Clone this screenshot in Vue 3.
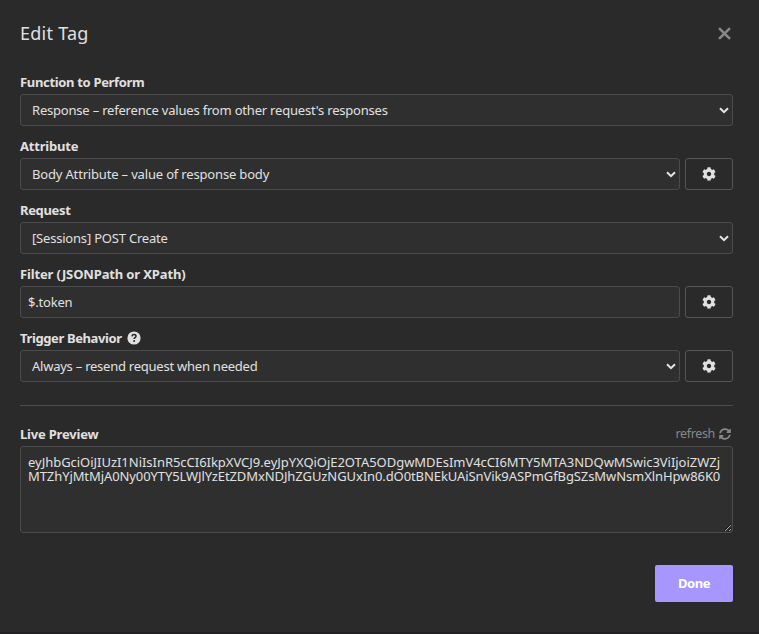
<script setup>
const fields = [
  { label: 'Function to Perform', value: "Response – reference values from other request's responses", kind: 'select', key: 'function' },
  { label: 'Attribute', value: 'Body Attribute – value of response body', kind: 'select', gear: true, key: 'attribute' },
  { label: 'Request', value: '[Sessions] POST Create', kind: 'select', key: 'request' },
  { label: 'Filter (JSONPath or XPath)', value: '$.token', kind: 'input', gear: true, key: 'filter' },
  { label: 'Trigger Behavior', value: 'Always – resend request when needed', kind: 'select', gear: true, help: true, key: 'trigger' },
]
</script>

<template>
  <main class="dialog">
    <header class="head">
      <h1><span>Edit Tag</span></h1>
      <button class="close" aria-label="Close">
        <svg width="13" height="13" viewBox="0 0 13 13"><path d="M1.800 1.800 11.200 11.200M11.200 1.800 1.800 11.200" fill="none" stroke="#888" stroke-width="2.600" stroke-linecap="round" /></svg>
      </button>
    </header>

    <section v-for="f in fields" :key="f.key" class="field" :class="f.key">
      <div class="label">
        <span class="label-text">{{ f.label }}</span>
        <svg v-if="f.help" class="help" width="14" height="14" viewBox="0 0 14 14">
          <circle cx="7" cy="7" r="6.600" fill="#e0e0e0" />
          <path d="M5 5.400C5.100 4.200 5.900 3.600 7 3.600c1.200 0 2 .7 2 1.700 0 1.300-1.900 1.400-1.900 2.800" fill="none" stroke="#2a2a2a" stroke-width="1.500" />
          <circle cx="7.100" cy="10" r="1" fill="#2a2a2a" />
        </svg>
      </div>
      <div class="row">
        <div class="control" :class="f.kind">
          <span class="value">{{ f.value }}</span>
          <svg v-if="f.kind === 'select'" width="10" height="7" viewBox="0 0 10 7"><path d="M1 1.200 5 5.200 9 1.200" fill="none" stroke="#e4e4e4" stroke-width="2" /></svg>
        </div>
        <button v-if="f.gear" class="gear" aria-label="Settings">
          <svg width="14" height="14" viewBox="0 0 512 512"><path fill="#e0e0e0" d="M487.400 315.700l-42.600-24.600c4.300-23.200 4.300-47 0-70.200l42.600-24.600c4.900-2.800 7.100-8.600 5.500-14-11.100-35.600-30-67.800-54.700-94.600-3.800-4.100-10-5.100-14.800-2.300L380.800 110c-17.900-15.400-38.500-27.300-60.800-35.100V25.800c0-5.600-3.900-10.500-9.400-11.700-36.700-8.200-74.300-7.800-109.200 0-5.500 1.200-9.400 6.100-9.400 11.700V75c-22.200 7.900-42.800 19.800-60.800 35.100L88.700 85.500c-4.900-2.800-11-1.900-14.800 2.300-24.700 26.700-43.600 58.900-54.700 94.600-1.700 5.400.6 11.200 5.500 14L67.300 221c-4.300 23.200-4.300 47 0 70.200l-42.600 24.600c-4.900 2.800-7.100 8.600-5.500 14 11.100 35.600 30 67.800 54.700 94.600 3.800 4.100 10 5.100 14.800 2.300l42.600-24.600c17.900 15.400 38.500 27.300 60.800 35.100v49.200c0 5.600 3.900 10.500 9.400 11.700 36.700 8.200 74.300 7.800 109.200 0 5.500-1.200 9.400-6.100 9.400-11.700v-49.200c22.200-7.900 42.800-19.800 60.800-35.100l42.600 24.600c4.900 2.800 11 1.900 14.800-2.300 24.700-26.700 43.600-58.900 54.700-94.600 1.500-5.500-.7-11.300-5.600-14.100zM256 336c-44.100 0-80-35.900-80-80s35.900-80 80-80 80 35.900 80 80-35.900 80-80 80z" /></svg>
        </button>
      </div>
    </section>

    <hr />

    <section class="preview">
      <div class="label preview-head">
        <span class="label-text">Live Preview</span>
        <button class="refresh">
          <span>refresh</span>
          <svg width="12" height="12" viewBox="0 0 512 512"><path fill="#888" d="M370.720 133.280C339.458 104.008 298.888 87.962 255.848 88c-77.458.068-144.328 53.178-162.791 126.850-1.344 5.363-6.122 9.150-11.651 9.150H24.103c-7.498 0-13.194-6.807-11.807-14.176C33.933 94.924 134.813 8 256 8c66.448 0 126.791 26.136 171.315 68.685L463.030 40.970C478.149 25.851 504 36.559 504 57.941V192c0 13.255-10.745 24-24 24H345.941c-21.382 0-32.090-25.851-16.971-40.971l41.750-41.749zM32 296h134.059c21.382 0 32.090 25.851 16.971 40.971l-41.750 41.750c31.262 29.273 71.835 45.319 114.876 45.280 77.418-.07 144.315-53.144 162.787-126.849 1.344-5.363 6.122-9.150 11.651-9.150h57.304c7.498 0 13.194 6.807 11.807 14.176C478.067 417.076 377.187 504 256 504c-66.448 0-126.791-26.136-171.315-68.685L48.970 471.030C33.851 486.149 8 475.441 8 454.059V320c0-13.255 10.745-24 24-24z" /></svg>
        </button>
      </div>
      <div class="output">
        <span class="line one">eyJhbGciOiJIUzI1NiIsInR5cCI6IkpXVCJ9.eyJpYXQiOjE2OTA5ODgwMDEsImV4cCI6MTY5MTA3NDQwMSwic3ViIjoiZWZj</span>
        <span class="line two">MTZhYjMtMjA0Ny00YTY5LWJlYzEtZDMxNDJhZGUzNGUxIn0.dO0tBNEkUAiSnVik9ASPmGfBgSZsMwNsmXlnHpw86K0</span>
      </div>
    </section>

    <footer><button class="done"><span>Done</span></button></footer>
  </main>
</template>

<style>
body { background: #2a2a2a; }
</style>

<style scoped>
.dialog { box-sizing: border-box; height: 634px; padding: 20px 26px 0 20px; background: #2a2a2a; border-bottom: 2px solid #241e25; color: #e0e0e0; font: 13px/16px "Noto Sans", "Open Sans", sans-serif; white-space: nowrap; overflow: hidden; }
button { font: inherit; color: inherit; background: none; border: 0; padding: 0; margin: 0; }
svg { display: block; flex: none; }
.head { display: flex; justify-content: space-between; height: 54px; }
h1 { margin: 0; font-size: 18px; line-height: 26px; font-weight: 400; letter-spacing: .25px; }
.close { height: 26px; padding-right: 2px; }
.field { height: 64px; }
.label { display: flex; align-items: center; height: 16px; margin-bottom: 4px; font-weight: 700; }
.help { margin-left: 5px; }
.row { display: flex; gap: 5px; height: 32px; }
.control { box-sizing: border-box; flex: 1; display: flex; align-items: center; justify-content: space-between; padding: 0 3px 0 11px; border: 1px solid #4b4b4b; border-radius: 3px; background: #2f2f2f; }
.control.input { padding-left: 7px; }
.gear { box-sizing: border-box; width: 48px; display: flex; align-items: center; justify-content: center; border: 1px solid #555; border-radius: 3px; }
hr { margin: 11px 0 20px; border: 0; border-top: 1px solid #4b4b4b; }
.preview-head { justify-content: space-between; }
.refresh { display: flex; align-items: center; gap: 4px; padding-right: 2px; color: #888; font-size: 12.5px; font-weight: 400; letter-spacing: -.35px; }
.refresh span { margin-top: -1px; }
.output { box-sizing: border-box; height: 87px; padding: 8px 8px 8px 7px; border: 1px solid #4b4b4b; border-radius: 3px; background: #2f2f2f; resize: vertical; overflow: hidden; line-height: 14px; }
.line { display: block; width: max-content; }
footer { display: flex; justify-content: flex-end; padding-top: 32px; }
.done { width: 78px; height: 37px; padding-bottom: 2px; border-radius: 2px; background: #a896ff; color: #fff; font-weight: 700; letter-spacing: -.5px; }
.label-text, .value { letter-spacing: -.2px; }
.function .label-text { letter-spacing: -.33px; }
.request .label-text { letter-spacing: -.35px; }
.filter .label-text { letter-spacing: -.14px; }
.trigger .label-text { letter-spacing: -.38px; }
.attribute .value { letter-spacing: -.17px; }
.trigger .value { letter-spacing: -.24px; }
.line.one { letter-spacing: -.03px; }
.line.two { letter-spacing: -.09px; }
</style>
